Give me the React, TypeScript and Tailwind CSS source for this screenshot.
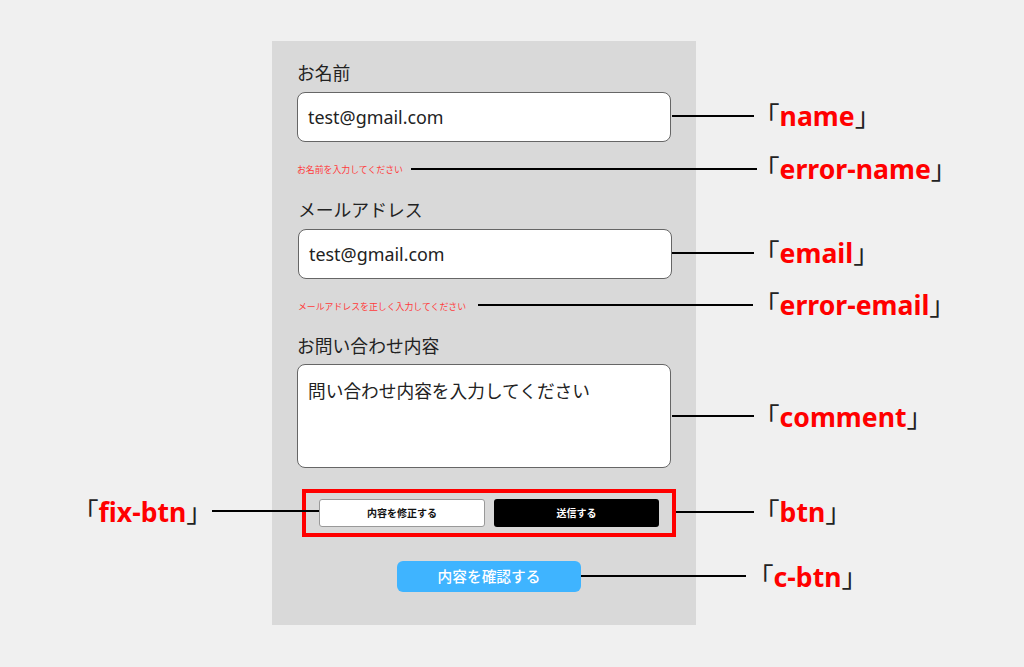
// フォーム仕様図 — 各パーツに class 名の注釈を付けた画面
const FONT = "font-['Noto_Sans','Noto_Sans_CJK_JP',sans-serif]";

const LINES = [
  { id: "name", x: 672, y: 115, w: 82 },
  { id: "error-name", x: 411, y: 168, w: 346 },
  { id: "email", x: 672, y: 252, w: 82 },
  { id: "error-email", x: 478, y: 304, w: 275 },
  { id: "comment", x: 672, y: 415, w: 82 },
  { id: "btn", x: 676, y: 511, w: 78 },
  { id: "c-btn", x: 581, y: 575, w: 165 },
  { id: "fix-btn", x: 212, y: 510, w: 107 },
];

const LABELS = [
  { id: "name", x: 753, y: 98 },
  { id: "error-name", x: 753, y: 151 },
  { id: "email", x: 753, y: 235 },
  { id: "error-email", x: 753, y: 287 },
  { id: "comment", x: 753, y: 399 },
  { id: "btn", x: 753, y: 494 },
  { id: "c-btn", x: 747, y: 559 },
  { id: "fix-btn", x: 72, y: 494 },
];

function Field({ label, shift, children }: { label: string; shift?: boolean; children: React.ReactNode }) {
  return (
    <div className={shift ? "ml-px" : ""}>
      <p className="text-[17.8px] leading-[24px] text-[#222]">{label}</p>
      {children}
    </div>
  );
}

function Input({ value }: { value: string }) {
  return (
    <div className="mt-[7px] w-[374px] h-[50px] bg-white border border-[#666] rounded-lg pl-[10px] flex items-center text-[17.9px] text-[#222]">
      {value}
    </div>
  );
}

function ErrorText({ children }: { children: React.ReactNode }) {
  return <p className="mt-[21px] text-[8.9px] leading-[14px] text-[#ff3b3b]">{children}</p>;
}

export default function App() {
  return (
    <div className={`relative w-[1024px] h-[667px] overflow-hidden bg-[#f0f0f0] pt-[41px] pl-[272px] ${FONT}`}>
      <div className="w-[424px] h-[584px] bg-[#d9d9d9] pl-[25px] pt-[20px]">
        <Field label="お名前">
          <Input value="test@gmail.com" />
        </Field>
        <ErrorText>お名前を入力してください</ErrorText>

        <div className="mt-[21px]">
          <Field label="メールアドレス" shift>
            <Input value="test@gmail.com" />
          </Field>
        </div>
        <div className="ml-px">
          <ErrorText>メールアドレスを正しく入力してください</ErrorText>
        </div>

        <div className="mt-[20px]">
          <Field label="お問い合わせ内容">
            <div className="mt-[6px] w-[374px] h-[104px] bg-white border border-[#666] rounded-lg pl-[10px] pt-[13px] text-[17.7px] leading-[26px] text-[#222]">
              問い合わせ内容を入力してください
            </div>
          </Field>
        </div>

        <div className="mt-[21px] ml-[5px] w-[374px] h-[48px] border-4 border-[#ff0000] flex items-center pl-[13px] gap-[9px]">
          <button className="w-[166px] h-[28px] bg-white border border-[#999] rounded-[3px] text-[10px] font-bold text-[#111]">
            内容を修正する
          </button>
          <button className="w-[165px] h-[28px] bg-black rounded-[3px] text-[10px] font-bold text-white">
            送信する
          </button>
        </div>

        <button className="block mt-[24px] ml-[100px] w-[184px] h-[31px] bg-[#3fb4ff] rounded-md text-[14.7px] font-medium text-white">
          内容を確認する
        </button>
      </div>

      {/* 注釈の引き出し線 */}
      {LINES.map((l) => (
        <div
          key={l.id}
          className="absolute h-[2px] bg-black"
          style={{ left: l.x, top: l.y, width: l.w }}
        />
      ))}
      {LABELS.map((l) => (
        <p
          key={l.id}
          className="absolute text-[26.6px] leading-[36px] font-bold whitespace-nowrap text-[#222]"
          style={{ left: l.x, top: l.y }}
        >
          <span className="font-normal">「</span>
          <span className="text-[#ff0000]">{l.id}</span>
          <span className="font-normal">」</span>
        </p>
      ))}
    </div>
  );
}
